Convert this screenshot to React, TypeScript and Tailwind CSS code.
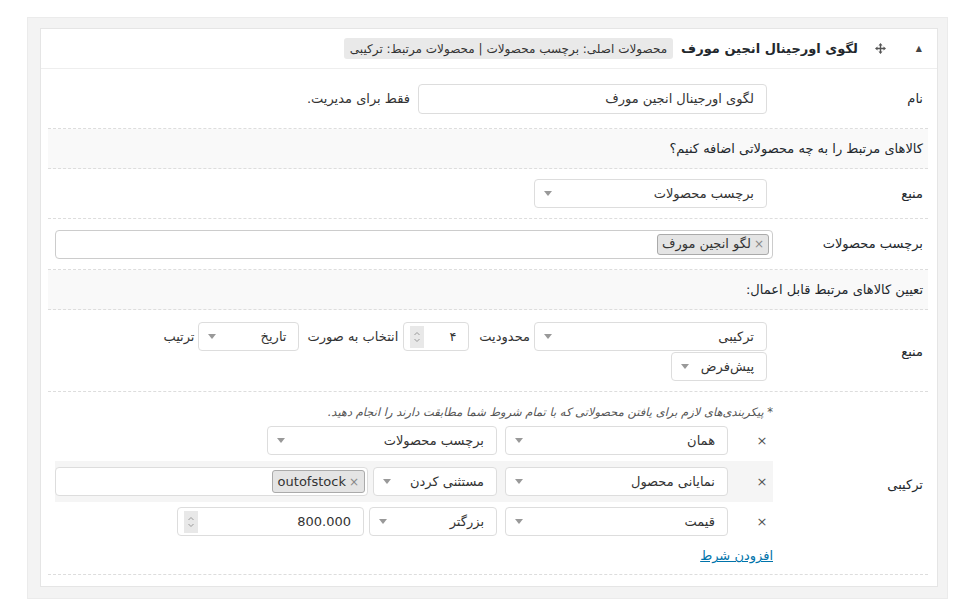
import React from "react";

const Arrow = () => (
    <svg width="8" height="5" viewBox="0 0 8 5" className="shrink-0">
        <path d="M0 0h8L4 5z" fill="#999" />
    </svg>
)

const Select = ({ label, className }: { label: string; className: string }) => (
    <div className={`flex h-[29px] shrink-0 items-center justify-between rounded-[4px] border border-[#ddd] bg-white pr-[12px] pl-[9px] ${className}`}>
        <span>{label}</span>
        <Arrow />
    </div>
)

const Spinner = () => (
    <div className="flex h-[22px] w-[14px] flex-col items-center justify-center bg-[#e8e8e8]">
        <svg width="8" height="14" viewBox="0 0 8 14">
            <path d="M1.5 5L4 2.5 6.5 5M1.5 9L4 11.5 6.5 9" fill="none" stroke="#999" strokeWidth="1" />
        </svg>
    </div>
)

const NumberInput = ({ value, className }: { value: string; className: string }) => (
    <div className={`flex h-[29px] shrink-0 items-center justify-between rounded-[4px] border border-[#ddd] bg-white pr-[12px] pl-[6px] ${className}`}>
        <span>{value}</span>
        <Spinner />
    </div>
)

const Chip = ({ text }: { text: string }) => (
    <span className="flex h-[21px] items-center gap-[3px] rounded-[3px] border border-[#aaa] bg-[#e4e4e4] px-[4px] text-[#333]">
        <span className="text-[12px] text-[#888]">×</span>
        <span>{text}</span>
    </span>
)

const Row = ({ label, children, pad }: { label?: string; children: React.ReactNode; pad: string }) => (
    <div className={`flex items-center border-b border-dashed border-[#ddd] ${pad}`}>
        <div className="w-[155px] shrink-0 pr-[5px] text-[#23282d]">{label}</div>
        <div className="flex-1 pl-[7px]">{children}</div>
    </div>
)

const Section = ({ text }: { text: string }) => (
    <div className="flex h-[40px] items-center border-b border-dashed border-[#ddd] bg-[#f9f9f9] pr-[5px] text-[#23282d]">
        {text}
    </div>
)

const MoveIcon = () => (
    <svg width="11" height="11" viewBox="0 0 11 11">
        <path d="M5.5 0L3.5 2.5h1.3v2.3H2.5V3.5L0 5.5l2.5 2V6.2h2.3v2.3H3.5L5.5 11l2-2.5H6.2V6.2h2.3v1.3L11 5.5 8.5 3.5v1.3H6.2V2.5h1.3z" fill="#555" />
    </svg>
)

export default function App() {
    return (
        <div className="min-h-[616px] bg-white pt-[17px] pl-[27px] text-[13px] text-[#333]" style={{ fontFamily: '"DejaVu Sans", sans-serif' }}>
            <div dir="rtl" className="w-[921px] border border-[#ebebeb] bg-[#f3f3f3] pt-[10px] pr-[9px] pb-[11px] pl-[12px]">
                <div className="border border-[#e5e5e5] bg-white">
                    <div className="flex h-[40px] items-center border-b border-[#eee] pr-[15px]">
                        <span className="text-[8px] text-[#444]">▲</span>
                        <span className="mr-[30px]"><MoveIcon /></span>
                        <span className="mr-[17px] text-[13px] font-bold text-[#23282d]">لگوی اورجینال انجین مورف</span>
                        <span className="mr-[8px] flex h-[21px] items-center rounded-[3px] bg-[#e9e9e9] px-[6px] text-[12px] text-[#333]">
                            محصولات اصلی: برچسب محصولات | محصولات مرتبط: ترکیبی
                        </span>
                    </div>

                    <div className="pr-[9px] pb-[11px] pl-[7px]">
                        <Row label="نام" pad="h-[60px]">
                            <div className="flex items-center gap-[8px]">
                                <div className="mr-[6px] flex h-[30px] w-[349px] items-center rounded-[4px] border border-[#ddd] px-[12px]">
                                    لگوی اورجینال انجین مورف
                                </div>
                                <span>فقط برای مدیریت.</span>
                            </div>
                        </Row>

                        <Section text="کالاهای مرتبط را به چه محصولاتی اضافه کنیم؟" />

                        <Row label="منبع" pad="h-[50px]">
                            <Select label="برچسب محصولات" className="mr-[6px] w-[233px]" />
                        </Row>

                        <Row label="برچسب محصولات" pad="h-[51px]">
                            <div className="flex h-[29px] items-center rounded-[4px] border border-[#ccc] pr-[3px]">
                                <Chip text="لگو انجین مورف" />
                            </div>
                        </Row>

                        <Section text="تعیین کالاهای مرتبط قابل اعمال:" />

                        <Row label="منبع" pad="pt-[12px] pb-[10px]">
                            <div className="flex items-center">
                                <Select label="ترکیبی" className="mr-[6px] w-[233px]" />
                                <span className="mr-[4px]">محدودیت</span>
                                <NumberInput value="۴" className="mr-[10px] w-[66px]" />
                                <span className="mr-[5px]">انتخاب به صورت</span>
                                <Select label="تاریخ" className="mr-[8px] w-[101px]" />
                                <span className="mr-[4px]">ترتیب</span>
                            </div>
                            <Select label="پیش‌فرض" className="mt-[1px] mr-[6px] w-[96px]" />
                        </Row>

                        <Row label="ترکیبی" pad="pt-[12px] pb-[8px]">
                            <div className="text-[11.5px] italic text-[#555]">
                                * پیکربندی‌های لازم برای یافتن محصولاتی که با تمام شروط شما مطابقت دارند را انجام دهید.
                            </div>
                            <div className="mt-[5px] flex items-center gap-[8px]">
                                <span className="w-[22px] text-center text-[13px] text-[#555]">×</span>
                                <Select label="همان" className="mr-[15px] w-[223px]" />
                                <Select label="برچسب محصولات" className="w-[230px]" />
                            </div>
                            <div className="mt-[6px] flex items-center gap-[8px] bg-[#f5f5f5] py-[6px]">
                                <span className="w-[22px] text-center text-[13px] text-[#555]">×</span>
                                <Select label="نمایانی محصول" className="mr-[15px] w-[223px]" />
                                <Select label="مستثنی کردن" className="w-[124px]" />
                                <div className="-mr-[3px] flex h-[29px] flex-1 items-center rounded-[4px] border border-[#ddd] bg-white pr-[2px]">
                                    <span dir="ltr" className="flex h-[23px] items-center gap-[3px] rounded-[3px] border border-[#aaa] bg-[#e4e4e4] px-[5px] text-[13px] text-[#333]">
                                        <span>outofstock</span>
                                        <span className="text-[12px] text-[#888]">×</span>
                                    </span>
                                </div>
                            </div>
                            <div className="mt-[5px] flex items-center gap-[8px]">
                                <span className="w-[22px] text-center text-[13px] text-[#555]">×</span>
                                <Select label="قیمت" className="mr-[15px] w-[223px]" />
                                <Select label="بزرگتر" className="w-[128px]" />
                                <NumberInput value="800.000" className="-mr-[3px] w-[187px]" />
                            </div>
                            <a href="#" className="mt-[10px] inline-block text-[#0073aa] underline">افزودن شرط</a>
                        </Row>
                    </div>
                </div>
            </div>
        </div>
    )
}
